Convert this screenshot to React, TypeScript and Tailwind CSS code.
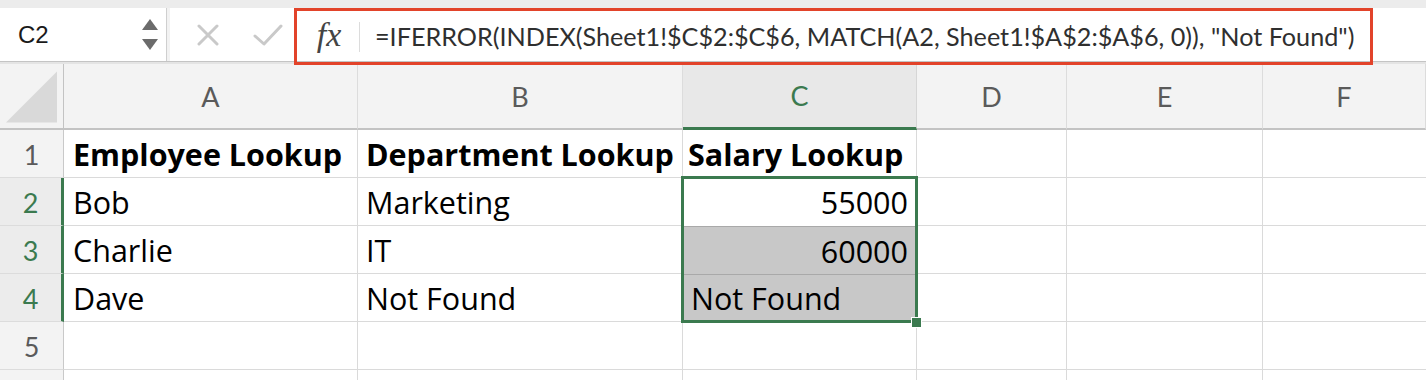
import { useState } from 'react';

const GREEN = 'text-[#3b7a4f]';

const rows = [
  { n: 1, a: 'Employee Lookup', b: 'Department Lookup', c: 'Salary Lookup', bold: true },
  { n: 2, a: 'Bob', b: 'Marketing', c: '55000' },
  { n: 3, a: 'Charlie', b: 'IT', c: '60000' },
  { n: 4, a: 'Dave', b: 'Not Found', c: 'Not Found' },
  { n: 5, a: '', b: '', c: '' },
  { n: 6, a: '', b: '', c: '' },
];

const cols = ['A', 'B', 'C', 'D', 'E', 'F'];

const cellText = "text-[30.5px] text-black whitespace-nowrap font-['Open_Sans',sans-serif]";

function Toolbar() {
  const [formula] = useState('=IFERROR(INDEX(Sheet1!$C$2:$C$6, MATCH(A2, Sheet1!$A$2:$A$6, 0)), "Not Found")');
  return (
    <div className="bg-[#ececec] pt-[8px]">
      <div className="h-[54px] flex bg-white border-b border-[#c4c4c4]">
        {/* name box */}
        <div className="w-[167px] shrink-0 flex items-center justify-between pl-[18px] pr-[8px] border-r border-[#cfcfcf]">
          <span className="text-[24px] text-[#1a1a1a] font-['Liberation_Sans',sans-serif]">C2</span>
          <div className="flex flex-col gap-[9px] items-center">
            <svg width="16" height="11" viewBox="0 0 16 11"><path d="M8 0 L16 11 L0 11 Z" fill="#6b6b6b" /></svg>
            <svg width="16" height="11" viewBox="0 0 16 11"><path d="M0 0 L16 0 L8 11 Z" fill="#6b6b6b" /></svg>
          </div>
        </div>
        <div className="w-[3px] shrink-0 bg-[#f2f2f2]" />
        {/* cancel / enter */}
        <div className="w-[124px] shrink-0 flex items-center gap-[34px] pl-[27px]">
          <svg width="22" height="22" viewBox="0 0 22 22">
            <path d="M2 2 L20 20 M20 2 L2 20" stroke="#c9c9c9" strokeWidth="3" strokeLinecap="round" />
          </svg>
          <svg width="30" height="22" viewBox="0 0 30 22">
            <path d="M2 12 L11 20 L28 2" stroke="#c9c9c9" strokeWidth="3" fill="none" strokeLinecap="round" strokeLinejoin="round" />
          </svg>
        </div>
        {/* formula bar */}
        <div className="flex-1 min-w-0 pr-[53px]">
          <div className="relative z-10 h-[57px] flex items-center border-[3px] border-[#e2432a]">
            <span className="w-[62px] shrink-0 text-center italic text-[34px] leading-none text-[#444] font-['Liberation_Serif',serif] pl-[2px] pb-[4px]">fx</span>
            <div className="w-px h-[30px] shrink-0 bg-[#dcdcdc]" />
            <span className="pl-[15px] text-[25.2px] text-[#2f2f2f] font-['Lato',sans-serif] whitespace-nowrap">{formula}</span>
          </div>
        </div>
      </div>
      <div className="h-[2px] bg-[#e4e4e4]" />
    </div>
  );
}

function Sheet() {
  return (
    <div className="grid grid-cols-[64px_294px_325px_234px_150px_196px_1fr] font-['Lato',sans-serif]">
      {/* corner */}
      <div className="h-[66px] bg-[#f3f3f3] border-r border-b-2 border-[#c3c3c3] flex items-end justify-end p-[6px] pb-[5px]">
        <svg width="52" height="52" viewBox="0 0 52 52"><path d="M52 0 L52 52 L0 52 Z" fill="#d9d9d9" /></svg>
      </div>
      {cols.map((c) => (
        <div
          key={c}
          className={
            c === 'C'
              ? 'h-[66px] bg-[#e8e8e8] border-r border-[#d6d6d6] border-b-[3px] border-b-[#3b7a4f] flex items-center justify-center pt-[2px] text-[27px] text-[#3b7a4f]'
              : 'h-[66px] bg-[#f3f3f3] border-r border-[#dcdcdc] border-b-2 border-b-[#c3c3c3] flex items-center justify-center pt-[2px] text-[27px] text-[#5a5a5a]'
          }
        >
          {c}
        </div>
      ))}
      {rows.map((r) => {
        const sel = r.n >= 2 && r.n <= 4;
        return [
          <div
            key={`h${r.n}`}
            className={
              sel
                ? `h-[48px] bg-[#ececec] border-b border-[#dcdcdc] border-r-[3px] border-r-[#3b7a4f] flex items-center justify-center pt-[3px] text-[27px] ${GREEN}`
                : 'h-[48px] bg-[#f3f3f3] border-b border-[#dcdcdc] border-r border-r-[#c9c9c9] flex items-center justify-center pt-[3px] text-[27px] text-[#5a5a5a]'
            }
          >
            {r.n < 6 ? r.n : ''}
          </div>,
          <div key={`a${r.n}`} className={`h-[48px] border-r border-b border-[#dadada] flex items-center pl-[9px] pt-[2px] ${cellText} ${r.bold ? 'font-bold' : ''}`}>
            {r.a}
          </div>,
          <div key={`b${r.n}`} className={`h-[48px] border-r border-b border-[#dadada] flex items-center pl-[8px] pt-[2px] ${cellText} ${r.bold ? 'font-bold' : ''}`}>
            {r.b}
          </div>,
          r.n === 2 ? (
            <div key="sel" className="row-span-3 relative border-r border-b border-[#dadada]">
              <div className={`h-[48px] bg-white flex items-center justify-end pr-[8px] pt-[2px] ${cellText}`}>55000</div>
              <div className={`h-[48px] bg-[#c8c8c8] border-t border-[#a9a9a9] flex items-center justify-end pr-[8px] pt-[2px] ${cellText}`}>60000</div>
              <div className={`h-[47px] bg-[#c8c8c8] border-t border-[#a9a9a9] flex items-center pl-[8px] pt-[2px] ${cellText}`}>Not Found</div>
              <div className="absolute -left-[2px] -top-[2px] -right-[2px] -bottom-[2px] border-[3px] border-[#3b7a4f]" />
              <div className="absolute -right-[6px] -bottom-[7px] w-[11px] h-[11px] bg-[#3b7a4f] border border-white" />
            </div>
          ) : sel ? null : (
            <div key={`c${r.n}`} className={`h-[48px] border-r border-b border-[#dadada] flex items-center pl-[5px] pt-[2px] ${cellText} ${r.bold ? 'font-bold' : ''}`}>
              {r.c}
            </div>
          ),
          <div key={`d${r.n}`} className="h-[48px] border-r border-b border-[#dadada]" />,
          <div key={`e${r.n}`} className="h-[48px] border-r border-b border-[#dadada]" />,
          <div key={`f${r.n}`} className="h-[48px] border-b border-[#dadada]" />,
        ];
      })}
    </div>
  );
}

export default function App() {
  return (
    <div className="w-[1426px] h-[380px] overflow-hidden bg-white">
      <Toolbar />
      <Sheet />
    </div>
  );
}
